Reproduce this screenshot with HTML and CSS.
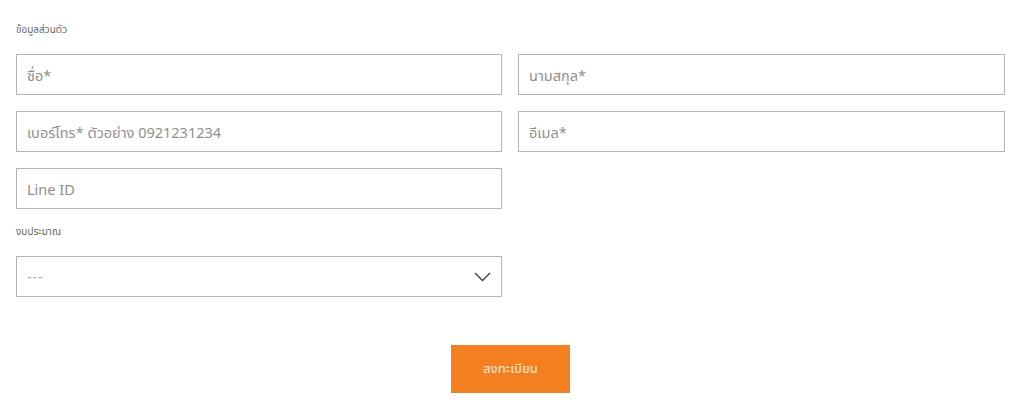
FILE: index.html
```html
<!DOCTYPE html>
<html lang="th">
<head>
<meta charset="utf-8">
<link rel="stylesheet" href="styles.css">
</head>
<body>
<form class="form">
  <div class="label first">ข้อมูลส่วนตัว</div>
  <div class="grid">
    <input class="field" type="text" placeholder="ชื่อ*">
    <input class="field" type="text" placeholder="นามสกุล*">
    <input class="field" type="text" placeholder="เบอร์โทร* ตัวอย่าง 0921231234">
    <input class="field" type="text" placeholder="อีเมล*">
    <input class="field" type="text" placeholder="Line ID">
  </div>
  <div class="label">งบประมาณ</div>
  <div class="grid">
    <div class="select">
      <span class="select-text">---</span>
      <svg class="chevron" width="17" height="10" viewBox="0 0 17 10"><path d="M1 1 L8.5 8.5 L16 1" fill="none" stroke="#444" stroke-width="1.4"/></svg>
    </div>
  </div>
  <div class="actions">
    <button type="button" class="submit">ลงทะเบียน</button>
  </div>
</form>
</body>
</html>
```
FILE: styles.css
```css
html, body {
  margin: 0;
  padding: 0;
  background: #fff;
}
body {
  font-family: "Noto Sans", "Noto Sans Thai", "DejaVu Sans", sans-serif;
}
.form {
  width: 989px;
  padding: 22px 0 0 16px;
}
.label {
  font-size: 10px;
  line-height: 14px;
  height: 16px;
  color: #666;
  margin: 15px 0 16px;
}
.label.first {
  margin-top: 0;
}
.grid {
  display: grid;
  grid-template-columns: 486px 487px;
  column-gap: 16px;
  row-gap: 16px;
}
.field, .select {
  box-sizing: border-box;
  height: 41px;
  width: 100%;
  border: 1px solid #b5b5b5;
  background: #fff;
  padding: 0 10px;
  font-family: inherit;
  font-size: 14.5px;
  color: #333;
  outline: none;
  margin: 0;
}
.field::placeholder {
  color: #8f8f8f;
}
.select {
  display: flex;
  align-items: center;
  justify-content: space-between;
  padding-right: 10px;
}
.select-text {
  color: #b0b0b0;
  font-size: 14px;
  letter-spacing: 1px;
}
.chevron {
  display: block;
}
.actions {
  display: flex;
  justify-content: center;
  margin-top: 48px;
}
.submit {
  width: 119px;
  height: 48px;
  border: none;
  background: #f47f20;
  color: #fde2c8;
  font-family: inherit;
  font-size: 13px;
  font-weight: 500;
  cursor: pointer;
}
```
